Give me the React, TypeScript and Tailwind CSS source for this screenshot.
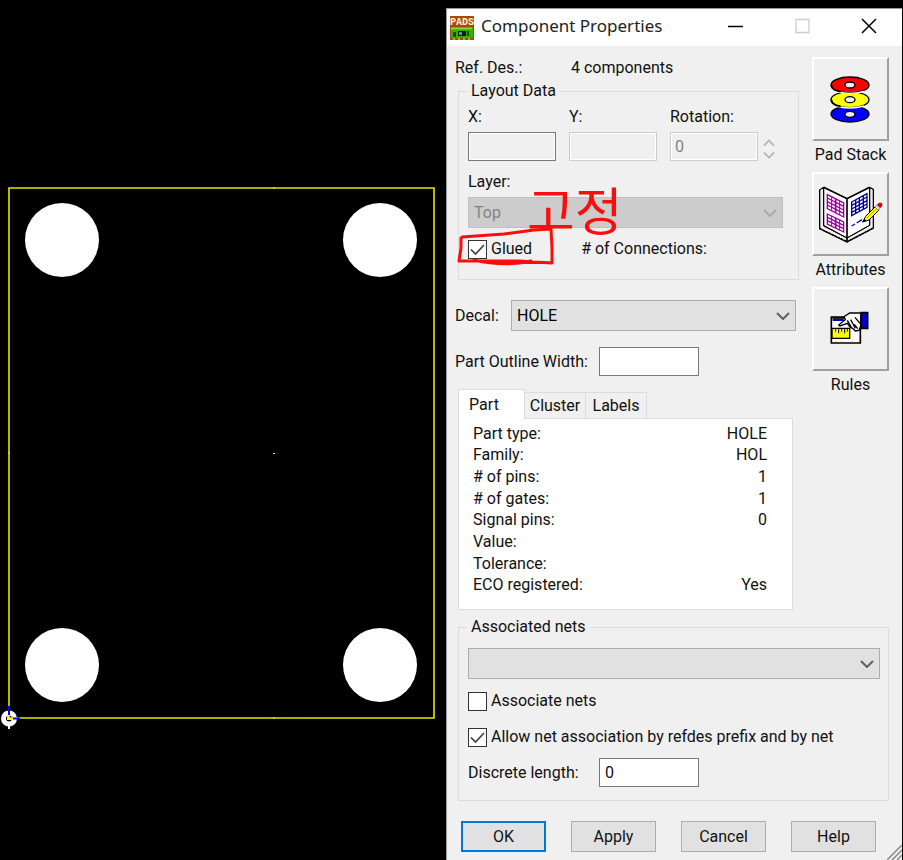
import { useState, type ReactNode } from "react";

const PART_ROWS: [string, string][] = [
  ["Part type:", "HOLE"],
  ["Family:", "HOL"],
  ["# of pins:", "1"],
  ["# of gates:", "1"],
  ["Signal pins:", "0"],
  ["Value:", ""],
  ["Tolerance:", ""],
  ["ECO registered:", "Yes"],
];

function BoardView() {
  const pads = [
    [62, 240],
    [380, 240],
    [62, 665],
    [380, 665],
  ];
  return (
    <svg viewBox="0 0 446 860" className="block h-full w-full" role="img" aria-label="Board outline">
      <path d="M9 188H434V718H9Z" fill="none" stroke="#e6e600" strokeWidth="1.6" />
      {pads.map(([x, y]) => (
        <circle key={`${x}-${y}`} cx={x} cy={y} r="37" fill="#fff" />
      ))}
      <path d="M273 453.500h2" stroke="#ddd" strokeWidth="1" />
      <path d="M273 188h2M273 718h2M8 453h2" stroke="#fff" strokeWidth="1" opacity="0.6" />
      <circle cx="9" cy="718.500" r="5.500" fill="none" stroke="#fff" strokeWidth="5" />
      <path d="M9 724v5" stroke="#fff" strokeWidth="2" />
      <path d="M9 706v9M12 718.500h8" stroke="#00f" strokeWidth="2" />
      <path d="M8 716v3h5" fill="none" stroke="#ff0" strokeWidth="2" />
    </svg>
  );
}

function PadsLogo() {
  return (
    <svg width="24" height="24" viewBox="0 0 24 24" aria-hidden="true">
      <rect width="24" height="24" fill="#a84a08" />
      <rect x="1" y="11" width="22" height="11" fill="#38b000" />
      <path d="M1 12.500H22" stroke="#8be03a" strokeWidth="1.500" />
      <path d="M3 16h3v5H3zM17 15h2v5h-2z" fill="#174a10" />
      <path d="M8 15h8v5H8z" fill="#101828" />
      <path d="M9 16h3v3H9z" fill="#6b8d9b" />
      <path d="M4 22v2M9 22v2M14 22v2M19 22v2" stroke="#70d020" strokeWidth="2" />
      <text x="12" y="9" textAnchor="middle" fontSize="10" fontWeight="700" fill="#fff3d0" fontFamily="Liberation Mono, monospace">
        PADS
      </text>
    </svg>
  );
}

function PadStackIcon() {
  const ring = (y: number, color: string) => (
    <g key={y}>
      <ellipse cx="542" cy={y} rx="57" ry="24" fill={color} stroke="#000" strokeWidth="4" />
      <path d={`M500 ${y + 19}Q542 ${y + 31} 584 ${y + 19}`} fill="none" stroke="#fff" strokeWidth="4" />
      <path d={`M486 ${y}Q488 ${y + 17} 514 ${y + 20}`} fill="none" stroke="#000" strokeWidth="5" />
      <ellipse cx="542" cy={y} rx="15" ry="9" fill="#eee" stroke="#000" strokeWidth="4" />
    </g>
  );
  return (
    <svg width="40" height="48" viewBox="482 222 120 144" className="-ml-[2px]" aria-hidden="true">
      <ellipse cx="542" cy="339" rx="57" ry="24" fill="#00f" stroke="#000" strokeWidth="4" />
      {ring(296, "#ff0")}
      {ring(252, "#f00")}
      <ellipse cx="542" cy="340" rx="15" ry="9" fill="#eee" stroke="#000" strokeWidth="4" />
    </svg>
  );
}

function AttributesIcon() {
  return (
    <svg width="64" height="57" viewBox="450 60 192 171" aria-hidden="true">
      <path d="M464 64L534 98L602 64V178L534 216L464 178Z" fill="#fff" stroke="#000" strokeWidth="3" />
      <path d="M464 64L452 72V188L534 228L613 186V70L602 64" fill="none" stroke="#000" strokeWidth="4" />
      <path d="M458 70V184L534 222L608 182V70" fill="none" stroke="#eee" strokeWidth="3" />
      <path d="M464 66V180L534 216L602 178V66" fill="none" stroke="#000" strokeWidth="3" />
      <path d="M452 188L534 227L613 186" fill="none" stroke="#000" strokeWidth="4" strokeDasharray="7 3" />
      <path d="M534 97V226M464 64L534 98L602 64" fill="none" stroke="#000" strokeWidth="5" />
      <g fill="none" stroke="#909" strokeWidth="4">
        <path d="M475 86L524 111V153L475 128ZM475 96L524 121M475 107L524 132M475 117L524 142" />
        <path d="M475 144L524 168V198L475 174ZM475 154L524 178M475 164L524 188" />
        <path d="M488 92V134M512 105V147M488 150V180M512 162V192" strokeWidth="3" />
        <path d="M500 98V140M500 156V186" strokeWidth="5" />
      </g>
      <path d="M548 108L594 83V124L548 149ZM548 118L594 93M548 129L594 104M548 139L594 114M560 101V142M583 89V130M571 95V136" fill="none" stroke="#009" strokeWidth="4" />
      <path d="M548 180l10-6M563 171l16-10" stroke="#00c" strokeWidth="4" />
      <path d="M581 168L590 151L620 121L630 132L600 162Z" fill="#ff0" stroke="#000" strokeWidth="3" />
      <path d="M593 157L624 127" stroke="#bb9b00" strokeWidth="3" />
      <path d="M580 169l6-11l6 6z" fill="#000" />
      <path d="M618 123l7-7l9 9l-6 8z" fill="#ddd" stroke="#666" strokeWidth="2" />
      <path d="M624 116l6-6h7l3 4v6l-7 6z" fill="#d80010" />
    </svg>
  );
}

function RulesIcon() {
  return (
    <svg width="39" height="33" viewBox="482 435 117 99" className="-mt-1 -ml-[2px]" aria-hidden="true">
      <path d="M486 453H573V531H486Z" fill="#fff" stroke="#000" strokeWidth="5" />
      <path d="M490 462H523" stroke="#00c" strokeWidth="6" />
      <path d="M489 456H526" stroke="#000" strokeWidth="5" />
      <path d="M488 487H541V517H488Z" fill="#ff0" stroke="#000" strokeWidth="4" />
      <path d="M499 488v9M508 488v14M517 488v9M526 488v14M534 488v9" stroke="#000" strokeWidth="3" />
      <path d="M508 477L528 461L524 452L541 441H574V480L569 493L558 495L550 487L543 484L534 472L512 480Z" fill="#fff" stroke="#000" strokeWidth="4" />
      <path d="M534 463L546 484M544 461L551 474L558 487M555 475L565 488M557 454L572 472" fill="none" stroke="#000" strokeWidth="4" />
      <path d="M576 440H595V487H576Z" fill="#00c" stroke="#000" strokeWidth="5" />
      <path d="M496 527h5M514 527h5M546 527h5" stroke="#dc0" strokeWidth="3" />
    </svg>
  );
}

function Chevron({ className }: { className: string }) {
  return (
    <svg width="14" height="8" viewBox="0 0 14 8" className={className} fill="none" stroke="currentColor" strokeWidth="2" aria-hidden="true">
      <path d="M1 1l6 6l6-6" />
    </svg>
  );
}

function Dropdown({ id, value, disabled = false, label }: { id: string; value: string; disabled?: boolean; label?: string }) {
  return (
    <div className="relative flex-1">
      <select
        id={id}
        aria-label={label}
        disabled={disabled}
        defaultValue={value}
        className="block h-[31px] w-full appearance-none border border-[#adadad] bg-[#e1e1e1] px-[5px] text-black opacity-100 disabled:border-[#bfbfbf] disabled:bg-[#cccccc] disabled:text-[#838383]"
      >
        <option>{value}</option>
      </select>
      <Chevron className={`pointer-events-none absolute top-[12px] right-[6px] ${disabled ? "text-[#a9a9a9]" : "text-[#606060]"}`} />
    </div>
  );
}

function CheckBox({ label, initial }: { label: string; initial: boolean }) {
  const [on, setOn] = useState(initial);
  return (
    <label className="flex h-5 items-center gap-1">
      <span className="grid">
        <input
          type="checkbox"
          checked={on}
          onChange={() => setOn(!on)}
          className="col-start-1 row-start-1 size-[19px] appearance-none border border-[#333] bg-white"
        />
        {on && (
          <svg viewBox="0 0 19 19" className="pointer-events-none col-start-1 row-start-1 size-[19px]" fill="none" stroke="#404040" strokeWidth="1.700" aria-hidden="true">
            <path d="M3 9.500l4.500 4.500l8.500-9" />
          </svg>
        )}
      </span>
      {label}
    </label>
  );
}

function ToolButton({ label, children }: { label: string; children: ReactNode }) {
  return (
    <div className="flex flex-col items-center">
      <button
        aria-label={label}
        className="flex h-[84px] w-full items-center justify-center border-2 border-t-white border-r-[#a0a0a0] border-b-[#a0a0a0] border-l-white bg-[#f0f0f0]"
      >
        {children}
      </button>
      <span className="mt-1 h-5 whitespace-nowrap">{label}</span>
    </div>
  );
}

function TitleBar() {
  return (
    <header className="flex h-[37px] items-center bg-white pr-[25px] pl-[3px]">
      <PadsLogo />
      <h1 className="ml-[7px] flex-1 pb-1 font-['Noto_Sans',sans-serif] text-[17px] leading-6 text-[#222]">Component Properties</h1>
      <div className="flex items-center gap-[51px] pb-1 text-black">
        <button aria-label="Minimize">
          <svg width="16" height="16" viewBox="0 0 16 16" stroke="currentColor" strokeWidth="1.500">
            <path d="M0 8.500H15" />
          </svg>
        </button>
        <button aria-label="Maximize" disabled className="text-[#cccccc]">
          <svg width="15" height="16" viewBox="0 0 15 16" fill="none" stroke="currentColor" strokeWidth="1.300">
            <path d="M1 1.500H14V14.500H1Z" />
          </svg>
        </button>
        <button aria-label="Close">
          <svg width="16" height="16" viewBox="0 0 16 16" stroke="currentColor" strokeWidth="1.500">
            <path d="M1 1L15 15M15 1L1 15" />
          </svg>
        </button>
      </div>
    </header>
  );
}

function LayoutData() {
  return (
    <fieldset className="relative mt-[3px] ml-[3px] border border-[#dcdcdc] px-[9px] pt-[6px] pb-5">
      <legend className="h-5 px-[3px]">Layout Data</legend>
      <div className="flex gap-[13px]">
        <div className="w-[88px]">
          <label htmlFor="x" className="block h-5">X:</label>
          <input id="x" readOnly className="mt-[5px] block h-[29px] w-full border border-[#7a7a7a] bg-[#f0f0f0] px-1 shadow-[inset_0_0_0_1px_#fff]" />
        </div>
        <div className="w-[88px]">
          <label htmlFor="y" className="block h-5">Y:</label>
          <input id="y" disabled className="mt-[5px] block h-[29px] w-full border border-[#cccccc] bg-[#f0f0f0] px-1 shadow-[inset_0_0_0_1px_#fff]" />
        </div>
        <div className="flex-1">
          <label htmlFor="rotation" className="block h-5">Rotation:</label>
          <div className="mt-[5px] flex items-center gap-[5px]">
            <input id="rotation" disabled defaultValue="0" className="block h-[29px] w-[88px] border border-[#cccccc] bg-[#f0f0f0] px-1 text-[#838383] shadow-[inset_0_0_0_1px_#fff]" />
            <div className="flex flex-col gap-1 pt-1 text-[#b4b4b4]">
              <button aria-label="Increase rotation" disabled>
                <Chevron className="w-3 rotate-180" />
              </button>
              <button aria-label="Decrease rotation" disabled>
                <Chevron className="w-3" />
              </button>
            </div>
          </div>
        </div>
      </div>
      <label htmlFor="layer" className="mt-[11px] block h-5">Layer:</label>
      <div className="mt-[5px] mr-[6px] flex">
        <Dropdown id="layer" value="Top" disabled />
      </div>
      <div className="mt-[11px] flex gap-[49px]">
        <CheckBox label="Glued" initial />
        <span className="h-5"># of Connections:</span>
      </div>
      {/* red review mark-up on top of the form */}
      <svg width="96" height="40" viewBox="0 0 96 40" className="pointer-events-none absolute bottom-[11px] left-0 overflow-visible" fill="none" stroke="#fa0d0d" strokeWidth="3" strokeLinecap="round" strokeLinejoin="round" aria-hidden="true">
        <path d="M2 10V20L0 33H60L93 35V20L92 1L75 2L45 6L3 9M15 32Q45 39 72 33" />
      </svg>
      <span className="pointer-events-none absolute top-[76px] left-[68px] font-['Noto_Sans_CJK_KR',sans-serif] text-[52px] leading-[64px] font-normal text-[#fa0d0d]">고정</span>
    </fieldset>
  );
}

function PartTabs() {
  const [tab, setTab] = useState("Part");
  return (
    <div className="mt-[13px] mr-[6px] ml-[3px]">
      <div role="tablist" className="flex h-[29px] items-end">
        {["Part", "Cluster", "Labels"].map((name) => (
          <button
            key={name}
            role="tab"
            aria-selected={tab === name}
            onClick={() => setTab(name)}
            className={
              tab === name
                ? "-mb-px h-[30px] w-[67px] border border-b-0 border-[#dcdcdc] bg-white pr-[15px]"
                : "h-[26px] w-[61px] border-t border-r border-[#dcdcdc]"
            }
          >
            {name}
          </button>
        ))}
      </div>
      <div role="tabpanel" className="border border-[#dcdcdc] bg-white pt-1 pr-[25px] pb-[13px] pl-[14px]">
        <table className="h-[173px] w-full">
          <tbody>
            {PART_ROWS.map(([name, value]) => (
              <tr key={name}>
                <th scope="row" className="p-0 text-left font-normal">{name}</th>
                <td className="p-0 text-right">{value}</td>
              </tr>
            ))}
          </tbody>
        </table>
      </div>
    </div>
  );
}

function AssociatedNets() {
  return (
    <fieldset className="mt-[7px] ml-[3px] border border-[#dcdcdc] px-2 pt-[11px] pb-[13px]">
      <legend className="h-5 px-1">Associated nets</legend>
      <div className="flex pl-px">
        <Dropdown id="nets" value="" label="Associated nets" />
      </div>
      <div className="mt-3 flex pl-px">
        <CheckBox label="Associate nets" initial={false} />
      </div>
      <div className="mt-4 flex pl-px">
        <CheckBox label="Allow net association by refdes prefix and by net" initial />
      </div>
      <div className="mt-[11px] flex items-center pl-px">
        <label htmlFor="length" className="w-[131px]">Discrete length:</label>
        <input id="length" defaultValue="0" className="h-[29px] w-[100px] border border-[#7a7a7a] bg-white px-[5px]" />
      </div>
    </fieldset>
  );
}

function PropertiesDialog() {
  return (
    <section aria-label="Component Properties" className="relative flex w-[456px] shrink-0 flex-col border-t border-l border-[#999] bg-[#f0f0f0]">
      <TitleBar />
      <div className="pr-[13px] pl-2">
        <div className="flex gap-[13px]">
          <div className="flex-1 pt-3">
            <div className="flex h-5">
              <span className="w-[116px]">Ref. Des.:</span>
              <span>4 components</span>
            </div>
            <LayoutData />
            <div className="mt-5 mr-[3px] flex items-center">
              <label htmlFor="decal" className="w-14">Decal:</label>
              <Dropdown id="decal" value="HOLE" />
            </div>
            <div className="mt-4 flex items-center">
              <label htmlFor="outline" className="w-36">Part Outline Width:</label>
              <input id="outline" className="h-[29px] w-[100px] border border-[#7a7a7a] bg-white px-[5px]" />
            </div>
            <PartTabs />
          </div>
          <div className="flex w-[77px] flex-col gap-[7px] pt-[11px]">
            <ToolButton label="Pad Stack">
              <PadStackIcon />
            </ToolButton>
            <ToolButton label="Attributes">
              <AttributesIcon />
            </ToolButton>
            <ToolButton label="Rules">
              <RulesIcon />
            </ToolButton>
          </div>
        </div>
        <AssociatedNets />
        <div className="mt-5 mb-2 flex gap-[25px] pl-[6px]">
          <button className="h-[31px] w-[85px] border-2 border-[#0078d7] bg-[#e1e1e1]">OK</button>
          <button className="h-[31px] w-[85px] border border-[#adadad] bg-[#e1e1e1]">Apply</button>
          <button className="h-[31px] w-[85px] border border-[#adadad] bg-[#e1e1e1]">Cancel</button>
          <button className="h-[31px] w-[85px] border border-[#adadad] bg-[#e1e1e1]">Help</button>
        </div>
      </div>
      <svg width="15" height="15" viewBox="0 0 15 15" className="absolute right-0 bottom-0" stroke="#8a8a8a" strokeWidth="1.500" aria-hidden="true">
        <path d="M0 15L15 0M5 15L15 5M10 15L15 10" />
      </svg>
    </section>
  );
}

export default function App() {
  return (
    <main className="flex min-h-screen bg-black pr-px font-[Roboto,sans-serif] text-[16px] leading-5 text-[#111]">
      <div className="min-w-0 flex-1">
        <BoardView />
      </div>
      <div className="flex pt-2">
        <PropertiesDialog />
      </div>
    </main>
  );
}
